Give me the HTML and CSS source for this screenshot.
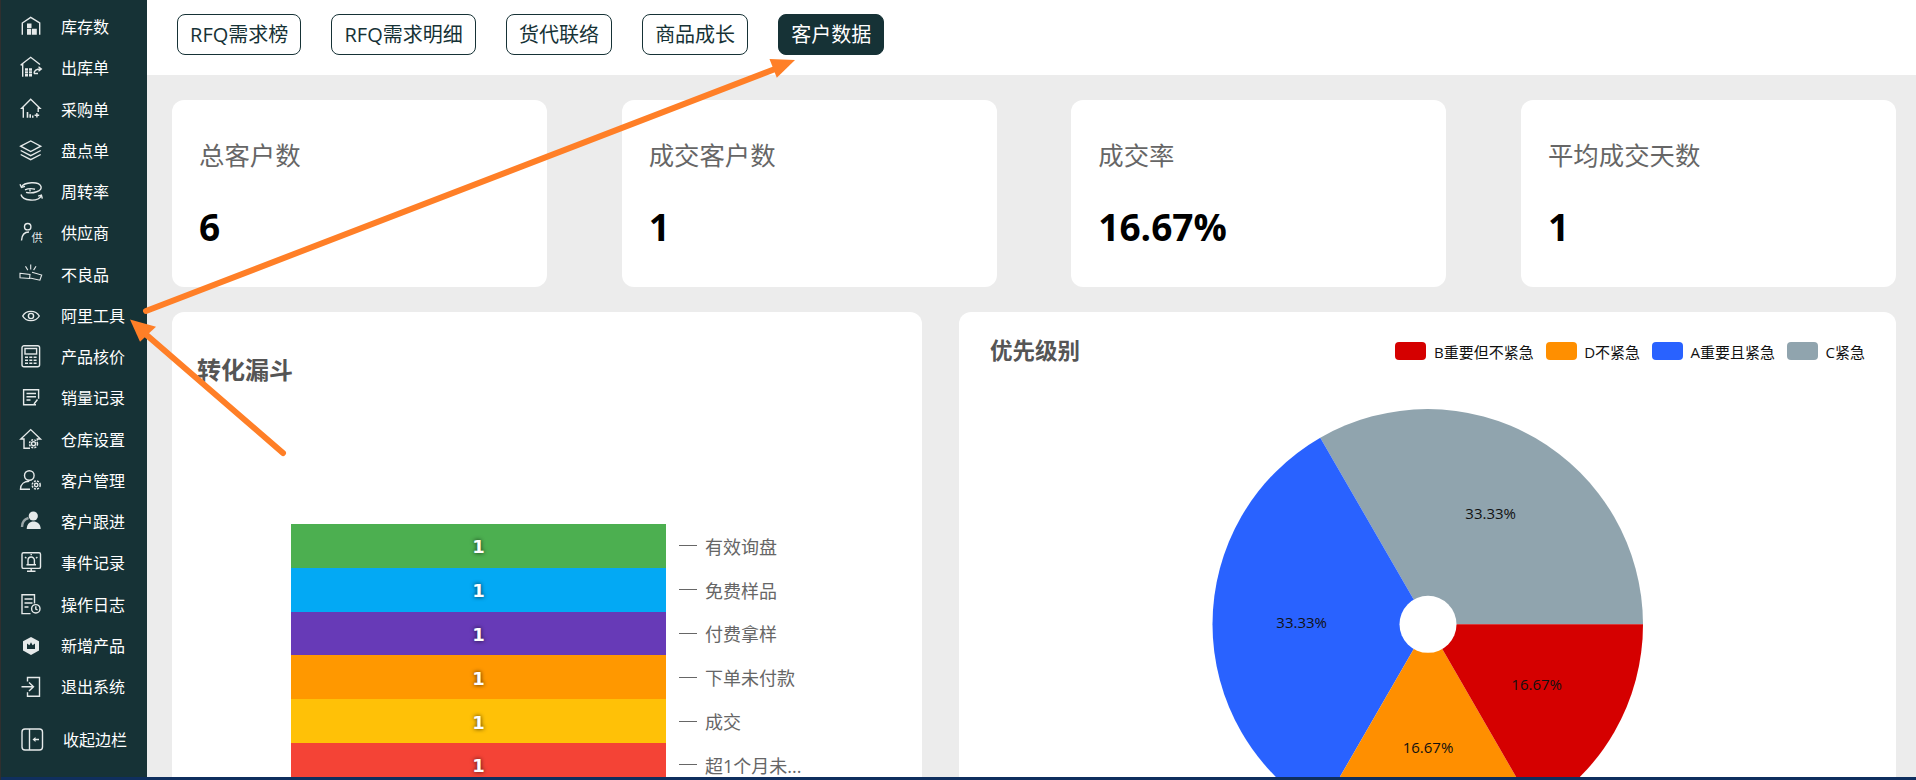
FILE: index.html
```html
<!DOCTYPE html>
<html lang="zh-CN">
<head>
<meta charset="utf-8">
<title>客户数据</title>
<link rel="stylesheet" href="styles.css">
</head>
<body>
<div class="app">
  <aside class="sidebar">
    <nav class="menu">
      <a class="item"><svg class="ico" viewBox="0 0 24 24"><path d="M3.3 19.7V8L11.7 2.3 20.7 8V19.7"/><path class="solid" d="M8 8.5h4.5v4.5H8zM8 13.8h4v5.9H8zM12.8 13.8h5v5.9h-5z"/></svg><span>库存数</span></a>
      <a class="item"><svg class="ico" viewBox="0 0 24 24"><path d="M3.7 20.7V8.5L1.7 9 11.7 1.3 21 8.5"/><path class="solid" d="M6 12.3h3v2.4H6zM10 12.3h3v2.4h-3zM6 15.2h3v2.4H6zM10 15.2h3v2.4h-3zM6 18.1h3v2.4H6zM10 18.1h3v2.4h-3z"/><path d="M15 17.5c0-3 2.5-4.5 6.5-4.5M19.5 10.8l2.8 2.2-2.8 2.2M15 17.5h4"/></svg><span>出库单</span></a>
      <a class="item"><svg class="ico" viewBox="0 0 24 24"><path d="M4.3 19.7V10.3H2.7L11.7 1.3 21 10.3H19.2V14"/><path class="solid" d="M7.7 14h1.6v5.7H7.7zM10.4 16.2H12v3.5h-1.6zM13 17.6h1.5v2.1H13z"/><path d="M15.6 17.2h4.6M17.9 15v4.6"/></svg><span>采购单</span></a>
      <a class="item"><svg class="ico" viewBox="0 0 24 24"><path d="M1.7 7.2 11.7 2l10 5.2-10 5.3zM1.7 11.5l10 5.2 10-5.2M1.7 15.5l10 5.2 10-5.2"/></svg><span>盘点单</span></a>
      <a class="item"><svg class="ico" viewBox="0 0 24 24"><path d="M2.5 7C5 2 20 .8 22 6.5 23.5 11 14 14 7 12.4"/><path d="M6 9.8c3-1.3 7-1.4 10-.6M11 8.6v3"/><path d="M2 14.5C3.5 21 19 22.5 22.5 15.5"/><path d="M1 4.2 2.5 7.5 6 6.4M23.3 18.6l-.9-3.4-3.3 1"/></svg><span>周转率</span></a>
      <a class="item"><svg class="ico" viewBox="0 0 24 24"><circle cx="8.7" cy="5.7" r="3.2"/><path d="M2.5 19.5C2.8 13.5 5.5 11 10 11"/><text class="glyph" x="12.5" y="20.5">供</text></svg><span>供应商</span></a>
      <a class="item"><svg class="ico thin" viewBox="0 0 24 24"><path d="M1 10.3l10 1.2-.5 4-9.5-.7zM13 9.2l9.7 2.8-1.8 5.2-9.9-2.2M11.7 1.6v4.8M6.5 3.3l2.3 3.8M17 3.3l-2.4 3.8"/></svg><span>不良品</span></a>
      <a class="item"><svg class="ico" viewBox="0 0 24 24"><path d="M3.7 12C7 6 16.5 5.6 20.3 12 16.5 18.4 7 18 3.7 12z"/><circle cx="12" cy="12" r="2.6"/></svg><span>阿里工具</span></a>
      <a class="item"><svg class="ico" viewBox="0 0 24 24"><rect x="3" y=".8" width="17.6" height="21" rx="2"/><rect x="6" y="3.5" width="11.6" height="5.5"/><path class="solid" d="M6 11.5h3v1.6H6zM10.3 11.5h3v1.6h-3zM14.6 11.5h3v1.6h-3zM6 14.5h3v1.6H6zM10.3 14.5h3v1.6h-3zM14.6 14.5h3v1.6h-3zM6 17.5h3v1.6H6zM10.3 17.5h3v1.6h-3zM14.6 17.5h3v1.6h-3z"/></svg><span>产品核价</span></a>
      <a class="item"><svg class="ico" viewBox="0 0 24 24"><path d="M17 18.8H4.6v-15h15v9"/><path d="M7.5 7.5h9.5M7.5 10.8h9.5M7.5 14h4M18.5 13.5l-3.5 4.5"/></svg><span>销量记录</span></a>
      <a class="item"><svg class="ico" viewBox="0 0 24 24"><path d="M11 20.3H5V11H1.8L11.7 1.6 21.5 11h-3.2v1.5"/><circle cx="14.5" cy="15.8" r="2"/><circle class="dash" cx="14.5" cy="15.8" r="4"/></svg><span>仓库设置</span></a>
      <a class="item"><svg class="ico" viewBox="0 0 24 24"><circle cx="10.3" cy="6.5" r="4.8"/><path d="M11 20.3H1.5C1.5 15 5.5 12.3 10.3 12.3"/><circle cx="17.2" cy="16" r="1.7"/><circle class="dash" cx="17.2" cy="16" r="4"/></svg><span>客户管理</span></a>
      <a class="item"><svg class="ico" viewBox="0 0 24 24"><path class="dim" d="M3 17C3 12 6 9 9.5 8"/><circle class="solid" cx="14.3" cy="6" r="4.6"/><path class="solid" d="M7.7 19C8 13.5 11 11.6 14.5 11.6S21.5 13.5 21.7 19z"/></svg><span>客户跟进</span></a>
      <a class="item"><svg class="ico" viewBox="0 0 24 24"><rect x="3" y="1.8" width="18.5" height="15.6" rx="1.5"/><path d="M8 20.3h8.5M12.2 17.4v3M9 13.5V9.2a3.2 3.2 0 0 1 6.4 0v4.3M7.5 13.8h9.5M6 6l1.4 1.2M18.4 6 17 7.2M12.2 3v1.2"/></svg><span>事件记录</span></a>
      <a class="item"><svg class="ico" viewBox="0 0 24 24"><path d="M15.5 10.5V1.8H3v18.8h8.5"/><path d="M5.5 6h8M5.5 10h8M5.5 14h4"/><circle cx="16.8" cy="15.8" r="4.2"/><path d="M16.8 13.2v2.8l1.8 1"/></svg><span>操作日志</span></a>
      <a class="item"><svg class="ico" viewBox="0 0 24 24"><path class="solid" d="M12 3l8 4.2v9.4L12 21l-8-4.4V7.2z"/><path class="cut" d="M8 9.5l2.4 1.8L12 8.3l1.6 3 2.4-1.8v5.6H8z"/></svg><span>新增产品</span></a>
      <a class="item"><svg class="ico" viewBox="0 0 24 24"><path d="M8.5 6.5V2.5h12v18.8h-12v-4"/><path d="M2.5 11.8H14M10 7.5l4.5 4.3-4.5 4.3"/></svg><span>退出系统</span></a>
    </nav>
    <a class="item collapse"><svg class="ico" viewBox="0 0 24 24"><rect x="3" y="1" width="20.5" height="21" rx="3"/><path d="M10.5 1v21M15 11.5h5"/><path class="solid" d="M13.5 11.5l3-2.6v5.2z"/></svg><span>收起边栏</span></a>
  </aside>

  <div class="main">
    <header class="topbar">
      <a class="tab">RFQ需求榜</a>
      <a class="tab">RFQ需求明细</a>
      <a class="tab">货代联络</a>
      <a class="tab">商品成长</a>
      <a class="tab active">客户数据</a>
    </header>

    <div class="content">
      <section class="stats">
        <div class="stat"><div class="stat-label">总客户数</div><div class="stat-value">6</div></div>
        <div class="stat"><div class="stat-label">成交客户数</div><div class="stat-value">1</div></div>
        <div class="stat"><div class="stat-label">成交率</div><div class="stat-value">16.67%</div></div>
        <div class="stat"><div class="stat-label">平均成交天数</div><div class="stat-value">1</div></div>
      </section>

      <section class="panels">
        <div class="panel panel-funnel">
          <h2 class="funnel-title">转化漏斗</h2>
          <div class="funnel">
            <div class="f-row"><div class="f-bar green">1</div><div class="f-label">有效询盘</div></div>
            <div class="f-row"><div class="f-bar sky">1</div><div class="f-label">免费样品</div></div>
            <div class="f-row"><div class="f-bar purple">1</div><div class="f-label">付费拿样</div></div>
            <div class="f-row"><div class="f-bar orange">1</div><div class="f-label">下单未付款</div></div>
            <div class="f-row"><div class="f-bar amber">1</div><div class="f-label">成交</div></div>
            <div class="f-row"><div class="f-bar red">1</div><div class="f-label">超1个月未...</div></div>
          </div>
        </div>

        <div class="panel panel-pie">
          <div class="pie-head">
            <h2 class="pie-title">优先级别</h2>
            <ul class="legend">
              <li><i class="sw c-b"></i>B重要但不紧急</li>
              <li><i class="sw c-d"></i>D不紧急</li>
              <li><i class="sw c-a"></i>A重要且紧急</li>
              <li><i class="sw c-c"></i>C紧急</li>
            </ul>
          </div>
          <svg class="pie" viewBox="0 0 937 512" width="937" height="512">
            <path class="s-c" d="M684 256.3A215.5 215.5 0 0 0 361.25 69.67L469 256.3Z"/>
            <path class="s-a" d="M361.25 69.67A215.5 215.5 0 0 0 361.25 442.93L469 256.3Z"/>
            <path class="s-d" d="M361.25 442.93A215.5 215.5 0 0 0 576.75 442.93L469 256.3Z"/>
            <path class="s-b" d="M576.75 442.93A215.5 215.5 0 0 0 684 256.3L469 256.3Z"/>
            <circle class="hole" cx="469" cy="256.3" r="28.5"/>
            <text class="pct" x="531.7" y="151">33.33%</text>
            <text class="pct" x="342.7" y="260">33.33%</text>
            <text class="pct" x="577.7" y="322">16.67%</text>
            <text class="pct" x="469" y="385">16.67%</text>
          </svg>
        </div>
      </section>
    </div>
  </div>
</div>
<div class="strip"></div>

<svg class="arrows" viewBox="0 0 1916 780" width="1916" height="780">
  <path class="a-line" d="M146 311 783 66"/>
  <path class="a-head" d="M795 60 769.5 59 776.8 77.7Z"/>
  <path class="a-line" d="M283 453 142 331"/>
  <path class="a-head" d="M130 319.5 156 326.7 140 341.7Z"/>
</svg>
</body>
</html>
```

FILE: styles.css
```css
* { box-sizing: border-box; }

html, body {
  margin: 0;
  height: 100%;
}

body {
  position: relative;
  width: 1916px;
  height: 780px;
  overflow: hidden;
  display: flex;
  flex-direction: column;
  border-left: 1px solid #2f2f2f;
  font-family: "Open Sans", "Noto Sans CJK SC", sans-serif;
  background: #ececec;
}

.app {
  display: flex;
  height: 777px;
  overflow: hidden;
}

.strip {
  height: 3px;
  background: #0f2f5e;
}

/* sidebar */
.sidebar {
  width: 146px;
  flex: none;
  background: #163236;
  color: #fff;
  padding-top: 6.5px;
}

.item {
  display: flex;
  align-items: center;
  height: 41.25px;
  padding-left: 18px;
  gap: 18px;
  font-size: 16px;
  line-height: 1;
  white-space: nowrap;
}

.collapse {
  margin-top: 12px;
  gap: 20px;
}

.ico {
  width: 24px;
  height: 24px;
  flex: none;
  overflow: visible;
  fill: none;
  stroke: #e6eaea;
  stroke-width: 1.4;
}

.ico.thin { stroke-width: 1.1; }
.ico .solid { fill: #e6eaea; stroke: none; }
.ico .cut { fill: #163236; stroke: none; }
.ico .dim { stroke: #9aa6a8; stroke-width: 2.4; }
.ico .dash { stroke-dasharray: 2 1.2; stroke-width: 1.5; }
.ico .glyph {
  fill: #e6eaea;
  stroke: none;
  font-size: 11px;
  font-family: "Noto Sans CJK SC", sans-serif;
}

/* main column */
.main {
  flex: 1;
  min-width: 0;
  display: flex;
  flex-direction: column;
}

.topbar {
  height: 75px;
  flex: none;
  background: #fff;
  display: flex;
  align-items: flex-start;
  gap: 30px;
  padding: 14px 0 0 30px;
}

.tab {
  height: 41px;
  padding: 0 12.1px;
  display: flex;
  align-items: center;
  border: 1px solid #163236;
  border-radius: 8px;
  color: #163236;
  font-size: 20px;
  line-height: 1;
  white-space: nowrap;
}

.tab.active {
  background: #163236;
  color: #fff;
}

.content {
  flex: 1;
  padding: 25px 20px 0 25px;
  background: #ececec;
  overflow: hidden;
}

/* stat cards */
.stats {
  display: flex;
  justify-content: space-between;
}

.stat {
  width: 375px;
  height: 187px;
  padding: 37px 0 0 27px;
  background: #fff;
  border-radius: 12px;
}

.stat-label {
  font-size: 25.4px;
  line-height: 36px;
  color: #666;
}

.stat-value {
  margin-top: 28px;
  font-size: 37px;
  line-height: 52px;
  font-weight: 700;
  color: #000;
}

/* chart panels */
.panels {
  display: flex;
  gap: 37px;
  margin-top: 25px;
}

.panel {
  height: 520px;
  flex: none;
  background: #fff;
  border-radius: 12px 12px 0 0;
}

.panel-funnel { width: 750px; }
.panel-pie { width: 937px; }

.funnel-title {
  margin: 0;
  padding: 42px 0 0 25px;
  font-size: 24px;
  line-height: 32px;
  font-weight: 700;
  color: #555;
}

.funnel {
  margin: 138px 0 0 119px;
}

.f-row {
  display: flex;
  align-items: center;
  height: 43.8px;
}

.f-bar {
  width: 375px;
  height: 100%;
  padding-top: 2px;
  display: flex;
  align-items: center;
  justify-content: center;
  color: #fff;
  font-family: "DejaVu Sans", sans-serif;
  font-size: 18px;
  font-weight: 700;
  text-shadow: 0 0 4px rgba(0, 0, 0, .75);
}

.green { background: #4caf50; }
.sky { background: #03a9f4; }
.purple { background: #673ab7; }
.orange { background: #ff9800; }
.amber { background: #ffc107; }
.red { background: #f44336; }

.f-label {
  display: flex;
  align-items: center;
  color: #666;
  font-size: 18px;
  white-space: nowrap;
}

.f-label::before {
  content: "";
  width: 18px;
  height: 1px;
  margin: 0 8px 0 13px;
  background: #666;
}

.pie-head {
  display: flex;
  align-items: center;
  justify-content: space-between;
  height: 56px;
  padding: 23px 31px 1px 31px;
}

.pie-title {
  margin: 0;
  font-size: 22.5px;
  line-height: 32px;
  font-weight: 700;
  color: #555;
}

.legend {
  display: flex;
  gap: 12px;
  margin: 0;
  padding: 0;
  list-style: none;
  font-size: 15px;
  color: #111;
}

.legend li {
  display: flex;
  align-items: center;
  gap: 7.5px;
  white-space: nowrap;
}

.sw {
  width: 31px;
  height: 18px;
  border-radius: 4px;
}

.c-b { background: #d50000; }
.c-d { background: #ff8f00; }
.c-a { background: #2962ff; }
.c-c { background: #90a4ae; }

.pie { display: block; }
.s-b { fill: #d50000; }
.s-d { fill: #ff8f00; }
.s-a { fill: #2962ff; }
.s-c { fill: #90a4ae; }
.hole { fill: #fff; }

.pct {
  font-size: 15px;
  text-anchor: middle;
  fill: #111;
}

/* annotation arrows over the page */
.arrows {
  position: absolute;
  left: -1px;
  top: 0;
  pointer-events: none;
}

.a-line {
  fill: none;
  stroke: #ff7f27;
  stroke-width: 6;
  stroke-linecap: round;
}

.a-head { fill: #ff7f27; }
```
